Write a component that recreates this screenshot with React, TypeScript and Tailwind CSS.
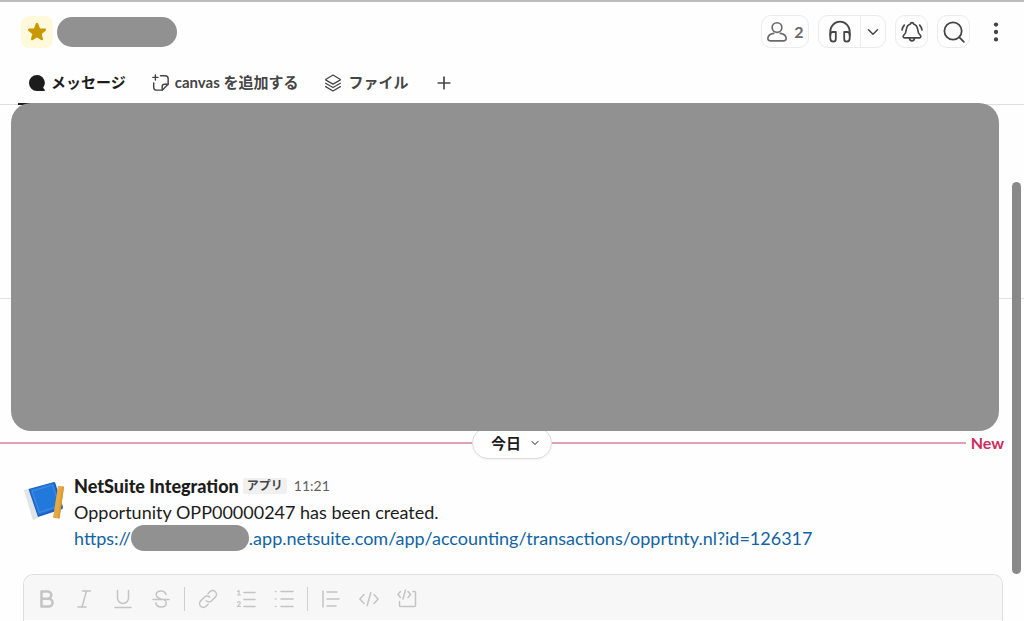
import React from "react";
import { ChevronDown, Plus } from "lucide-react";

type IconProps = { className?: string };

function Icon({ className = "size-5", width = 1.5, children }: IconProps & { width?: number; children: React.ReactNode }) {
  return (
    <svg
      viewBox="0 0 20 20"
      className={`shrink-0 ${className}`}
      fill="none"
      stroke="currentColor"
      strokeWidth={width}
      strokeLinecap="round"
      strokeLinejoin="round"
      aria-hidden="true"
    >
      {children}
    </svg>
  );
}

const StarIcon = () => (
  <Icon width={2.4}>
    <path fill="currentColor" d="M10 2l2.100 5.400 5.700.4-4.400 3.700 1.400 5.600-4.800-3-4.800 3 1.400-5.600-4.400-3.700 5.700-.4z" />
  </Icon>
);

const PersonIcon = () => (
  <Icon className="size-[22px]">
    <circle cx="10" cy="6" r="4.4" />
    <path d="M7 11.2c-3 .5-5.3 2.300-5.300 4.800 0 1.300.8 2 2 2h12.600c1.200 0 2-.7 2-2 0-2.500-2.300-4.300-5.300-4.800" />
  </Icon>
);

const HeadphonesIcon = () => (
  <Icon className="size-6">
    <path d="M1.900 13V9.500a8.100 8.100 0 0 1 16.200 0V13" />
    <path d="M1.900 12.200c0-1.600.9-2.200 2.100-2.200h2.500v5.800c0 1.400-.7 2.200-2 2.200-1.600 0-2.600-1.200-2.600-2.800zM18.100 12.200c0-1.600-.9-2.200-2.100-2.200h-2.500v5.800c0 1.400.7 2.200 2 2.200 1.600 0 2.600-1.200 2.600-2.800z" />
  </Icon>
);

const BellIcon = () => (
  <Icon className="size-6" width={1.400}>
    <path d="M10 2.200c-.8 0-1.300.5-1.300 1.200-2 .7-3.200 2.200-3.400 4.500-.2 2.600-1 3.800-2.300 5-.7.7-.3 2 .8 2h12.400c1.100 0 1.500-1.300.8-2-1.300-1.200-2.100-2.400-2.300-5-.2-2.300-1.400-3.800-3.400-4.500 0-.7-.5-1.200-1.300-1.200z" />
    <path d="M8 15.200c0 1.300.8 2.200 2 2.200s2-.9 2-2.200M3.600 4.200C2.500 5.300 1.900 6.700 1.700 8.300M16.400 4.200c1.100 1.100 1.700 2.500 1.900 4.100" />
  </Icon>
);

const SearchIcon = () => (
  <Icon className="size-6">
    <circle cx="9.200" cy="9.200" r="7.200" />
    <path d="M14.500 14.500l3.700 3.700" />
  </Icon>
);

const KebabIcon = () => (
  <Icon className="size-6">
    <g fill="currentColor" stroke="none">
      <circle cx="10" cy="3.800" r="1.800" />
      <circle cx="10" cy="10" r="1.800" />
      <circle cx="10" cy="16.200" r="1.800" />
    </g>
  </Icon>
);

const BubbleIcon = () => (
  <Icon className="size-4" width={0}>
    <path fill="currentColor" d="M10 0a10 10 0 1 0 0 20h9c.9 0 1.200-.9.600-1.500L17.700 16A10 10 0 0 0 10 0z" />
  </Icon>
);

const CanvasIcon = () => (
  <Icon className="size-[17px]" width={1.700}>
    <path d="M4 1v6M1 4h6M10 2h5.500A3.500 3.500 0 0 1 19 5.500V12l-7 7H5.500A3.500 3.500 0 0 1 2 15.500V10.500" />
    <path d="M19 12h-4.500a2.500 2.500 0 0 0-2.500 2.500V19" />
  </Icon>
);

const LayersIcon = () => (
  <Icon className="size-[18px]" width={1.400}>
    <path d="M10 1.200l7.800 4.600c.5.300.5.700 0 1L10 11.200 2.200 6.800c-.5-.3-.5-.7 0-1z" />
    <path d="M1.800 10.300l8.200 4.700 8.200-4.700M1.800 14l8.200 4.800 8.200-4.800" />
  </Icon>
);

const BoldIcon = () => (
  <Icon width={2.500}>
    <path d="M4.500 2.500h6.200a3.600 3.600 0 0 1 0 7.200H4.500zM4.500 9.700h7.200a3.900 3.900 0 0 1 0 7.800H4.500z" />
  </Icon>
);

const ItalicIcon = () => (
  <Icon>
    <path d="M7.500 2h8M3 18h8M11.500 2l-4.500 16" />
  </Icon>
);

const UnderlineIcon = () => (
  <Icon>
    <path d="M4.500 1.500v7.500a5.500 5.500 0 0 0 11 0V1.500M2 18.500h16" />
  </Icon>
);

const StrikeIcon = () => (
  <Icon>
    <path d="M15 5.500C14.300 3 12.500 2 10 2 7.200 2 5.200 3.500 5.200 5.800c0 2.200 1.800 3.300 4.800 4.200M2 10.500h16M4.800 14c.6 2.600 2.600 4 5.400 4 2.900 0 5-1.500 5-4 0-1.400-.6-2.500-1.700-3.300" />
  </Icon>
);

const LinkIcon = () => (
  <Icon>
    <path d="M8.200 11.800a3.800 3.800 0 0 0 5.400 0l3.700-3.700a3.800 3.800 0 0 0-5.400-5.400l-2 2" />
    <path d="M11.800 8.200a3.800 3.800 0 0 0-5.400 0l-3.700 3.700a3.800 3.800 0 0 0 5.400 5.400l2-2" />
  </Icon>
);

const OrderedIcon = () => (
  <Icon>
    <path d="M8 3.500h11M8 10.500h11M8 17.500h11" />
    <path strokeWidth={1.200} d="M1.500 2.500L3 1.500v4.500M1.500 6h3M1.500 13.700c.3-1.500 2.800-1.300 2.700.2 0 1.200-1.700 2.100-2.700 3.600h3" />
  </Icon>
);

const BulletIcon = () => (
  <Icon>
    <path d="M7 2.500h12M7 10h12M7 17.500h12M1.500 2.500h.4M1.500 10h.4M1.500 17.500h.4" />
  </Icon>
);

const QuoteIcon = () => (
  <Icon>
    <path d="M2 2v16M6 3h10M6 10h12M6 17h9" />
  </Icon>
);

const CodeIcon = () => (
  <Icon>
    <path d="M5 5.500L.9 10 5 14.500M15 5.500l4.100 4.500-4.100 4.500M11.800 3.500L8.200 16.500" />
  </Icon>
);

const CodeBlockIcon = () => (
  <Icon>
    <path d="M3.500 2.500L.9 5.500l2.600 3M11 2.500l2.600 3-2.600 3M8.500 1L6 10M16 2.500h1.500c.6 0 1 .4 1 1v13c0 .6-.4 1-1 1h-14c-.6 0-1-.4-1-1V12.500" />
  </Icon>
);

const BooksIcon = () => (
  <svg viewBox="0 0 40 40" className="size-10 shrink-0 self-start" aria-hidden="true">
    <path fill="#e1e4e6" d="M0 9.500q0-.8.800-1L5 8l10 28-5 3q-1 .3-1.400-.8z" />
    <path fill="#1a5fc0" d="M4.500 8L30 1q1 0 1.300 1L39 26l-.5 2L14 36z" />
    <path fill="#2378db" d="M6 8.500L29.500 2 37 26 14.500 34z" />
    <path fill="none" stroke="#5b9de6" strokeWidth=".6" d="M8 10l20.500-6 7 20.500L15.500 31.500z" />
    <path fill="#e8a93f" d="M34 5l5.500.6q.5 0 .5.700L35.500 37.500l-6.500-.8z" />
    <path fill="#d89a38" d="M38 5.500l2 .3L35.500 37.500l-1.700-.2z" />
  </svg>
);

const formatGroups = [
  [
    { label: "太字", icon: <BoldIcon /> },
    { label: "斜体", icon: <ItalicIcon /> },
    { label: "下線", icon: <UnderlineIcon /> },
    { label: "取り消し線", icon: <StrikeIcon /> },
  ],
  [
    { label: "リンク", icon: <LinkIcon /> },
    { label: "順序付きリスト", icon: <OrderedIcon /> },
    { label: "箇条書き", icon: <BulletIcon /> },
  ],
  [
    { label: "引用", icon: <QuoteIcon /> },
    { label: "コード", icon: <CodeIcon /> },
    { label: "コードブロック", icon: <CodeBlockIcon /> },
  ],
];

const iconButton = "flex h-[33px] items-center justify-center rounded-[10px] border border-[#ebebeb]";
const tab = "flex items-center gap-[6px] border-b-2 px-[11px]";

function ChannelHeader() {
  return (
    <header className="border-b border-[#dedede] text-[#454545]">
      <div className="flex items-center justify-between pt-[13px] pr-3 pl-[21px]">
        <div className="flex items-center gap-1 pt-px">
          <button aria-label="スター" className="flex size-8 items-center justify-center rounded-lg bg-[#fef9db] text-[#c99700]">
            <StarIcon />
          </button>
          <span className="h-[30px] w-[120px] rounded-full bg-[#919191]" />
        </div>
        <div className="flex items-center gap-[9px]">
          <button aria-label="メンバー" className={`${iconButton} w-12 gap-[6px] text-base font-bold text-[#696969]`}>
            <PersonIcon />
            2
          </button>
          <div className={`${iconButton} w-[68px]`}>
            <button aria-label="ハドルミーティング" className="flex h-full flex-1 items-center justify-center border-r border-[#ebebeb]">
              <HeadphonesIcon />
            </button>
            <button aria-label="ハドルのオプション" className="flex h-full w-6 items-center justify-center">
              <ChevronDown size={18} />
            </button>
          </div>
          <button aria-label="通知" className={`${iconButton} w-[33px]`}>
            <BellIcon />
          </button>
          <button aria-label="検索" className={`${iconButton} w-[33px]`}>
            <SearchIcon />
          </button>
          <button aria-label="その他" className="flex size-[33px] items-center justify-center">
            <KebabIcon />
          </button>
        </div>
      </div>

      <nav className="mt-[14px] -mb-px flex h-[43px] gap-1 pl-[18px] text-[15px] font-bold">
        <button className={`${tab} border-[#1d1c1d] text-[#1d1c1d]`}>
          <BubbleIcon />
          メッセージ
        </button>
        <button className={`${tab} border-transparent`}>
          <CanvasIcon />
          canvas を追加する
        </button>
        <button className={`${tab} border-transparent`}>
          <LayersIcon />
          ファイル
        </button>
        <button aria-label="タブを追加" className={`${tab} border-transparent`}>
          <Plus size={20} />
        </button>
      </nav>
    </header>
  );
}

function DateDivider() {
  return (
    <div className="-mt-1 grid h-8 grid-cols-[1fr_auto_1fr] items-center">
      <span className="h-[2px] bg-[#e0a0b8]" />
      <button className="flex h-8 w-20 items-center justify-center gap-2 rounded-full border border-[#dddddd] bg-white pl-2 text-[15px] font-bold text-[#1d1c1d] shadow-xs">
        今日
        <ChevronDown size={12} />
      </button>
      <div className="flex items-center">
        <span className="h-[2px] flex-1 bg-[#e0a0b8]" />
        <span className="pr-5 pl-[5px] text-base leading-6 font-bold text-[#cc2b5e]">New</span>
      </div>
    </div>
  );
}

function Message() {
  return (
    <article className="mt-[14px] flex gap-[10px] px-6 text-lg leading-[26px] text-[#1d1c1d]">
      <div className="pt-2">
        <BooksIcon />
      </div>
      <div>
        <div className="flex items-center">
          <strong className="font-black">NetSuite Integration</strong>
          <span className="ml-1 rounded-xs bg-[#f0f0f0] px-1 text-xs leading-4 font-bold text-[#454545]">アプリ</span>
          <time className="ml-[7px] text-sm text-[#616061]">11:21</time>
        </div>
        <p>Opportunity OPP00000247 has been created.</p>
        <a href="#opportunity" className="flex items-center text-[#1264a3]">
          https://
          <span className="h-[26px] w-[118px] rounded-full bg-[#919191]" />
          .app.netsuite.com/app/accounting/transactions/opprtnty.nl?id=126317
        </a>
      </div>
    </article>
  );
}

function Composer() {
  return (
    <div className="mt-[23px] mr-[21px] ml-[23px] rounded-t-[10px] border border-b-0 border-[#dfdfdf]">
      <div className="flex h-[45px] items-center rounded-t-[10px] bg-[#f7f7f7] pt-[2px] pl-1 text-[#c4c4c4]">
        {formatGroups.map((group, i) => (
          <React.Fragment key={i}>
            {i > 0 && <span className="mx-1 h-6 w-px bg-[#cfcfcf]" />}
            {group.map((item) => (
              <button key={item.label} aria-label={item.label} className="flex h-8 w-[38px] items-center justify-center">
                {item.icon}
              </button>
            ))}
          </React.Fragment>
        ))}
      </div>
      <div className="h-px bg-white" />
    </div>
  );
}

export default function App() {
  return (
    <div className="relative bg-[#fefefe] font-[Lato,'Noto_Sans_CJK_JP',sans-serif]">
      <div className="h-[2px] bg-[#bdbdbd]" />
      <ChannelHeader />
      <main>
        <div className="relative -mt-[2px] pr-[25px] pl-[11px]">
          <hr className="absolute inset-x-0 top-[195px] border-[#e3e3e3]" />
          <div className="relative h-[328px] rounded-[20px] bg-[#919191]" />
        </div>
        <DateDivider />
        <Message />
        <Composer />
      </main>
      <div className="absolute top-[182px] right-[3px] h-[392px] w-[9px] rounded-full bg-[#898989]" />
    </div>
  );
}
